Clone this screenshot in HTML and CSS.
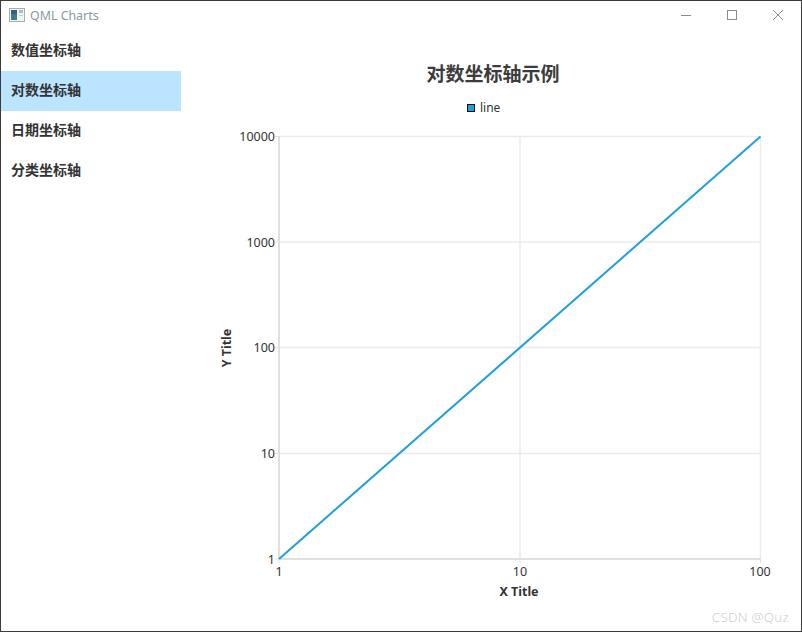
FILE: index.html
```html
<!DOCTYPE html>
<html lang="en">
<head>
    <meta charset="UTF-8">
    <title>QML Charts</title>
    <link rel="stylesheet" href="styles.css">
</head>
<body>
    <div class="window">
        <div class="titlebar">
            <svg class="app-icon" width="16" height="16" viewBox="0 0 16 16">
                <rect x="0.5" y="1.5" width="15" height="13" fill="#f2f4f4" stroke="#a9adad"/>
                <rect x="2" y="3" width="6" height="10" fill="#3c7f86"/>
                <rect x="2" y="3" width="6" height="4" fill="#35608c"/>
                <rect x="10" y="3" width="4" height="3" fill="#a9c4b4"/>
                <rect x="10" y="8" width="4" height="1" fill="#c4cccc"/>
            </svg>
            <span class="app-title">QML Charts</span>
            <div class="window-buttons">
                <svg width="12" height="12" viewBox="0 0 12 12"><path d="M1 6.5H11" stroke="#8c8c8c" fill="none"/></svg>
                <svg width="12" height="12" viewBox="0 0 12 12"><rect x="1.5" y="1.5" width="9" height="9" stroke="#8c8c8c" fill="none"/></svg>
                <svg width="12" height="12" viewBox="0 0 12 12"><path d="M1 1L11 11M11 1L1 11" stroke="#8c8c8c" fill="none"/></svg>
            </div>
        </div>
        <div class="content">
            <div class="sidebar">
                <div class="nav-item">数值坐标轴</div>
                <div class="nav-item active">对数坐标轴</div>
                <div class="nav-item">日期坐标轴</div>
                <div class="nav-item">分类坐标轴</div>
            </div>
            <svg class="chart" width="620" height="600" viewBox="181 31 620 600">
                <text class="chart-title" x="493" y="81" text-anchor="middle">对数坐标轴示例</text>

                <rect x="467.5" y="104.5" width="7" height="7" fill="#209fdf" stroke="#111"/>
                <text class="legend-label" x="480" y="112">line</text>

                <g class="grid">
                    <path d="M279 136.5H761M279 242H761M279 347.5H761M279 453.5H761"/>
                    <path d="M520 136V559M760.5 136V559"/>
                </g>
                <g class="axis">
                    <path d="M279 136V559M279 559H761"/>
                </g>
                <g class="ticks">
                    <path d="M275 136.5H279M275 242H279M275 347.5H279M275 453.5H279M275 559H279"/>
                    <path d="M279 559V563M520 559V563M760.5 559V563"/>
                </g>

                <path class="series" d="M279 559L760.5 136.5"/>

                <text class="tick" x="275" y="141" text-anchor="end">10000</text>
                <text class="tick" x="275" y="247" text-anchor="end">1000</text>
                <text class="tick" x="275" y="352" text-anchor="end">100</text>
                <text class="tick" x="275" y="458" text-anchor="end">10</text>
                <text class="tick" x="275" y="564" text-anchor="end">1</text>

                <text class="tick" x="279" y="576" text-anchor="middle">1</text>
                <text class="tick" x="520" y="576" text-anchor="middle">10</text>
                <text class="tick" x="760" y="576" text-anchor="middle">100</text>

                <text class="axis-title" x="519" y="596" text-anchor="middle">X Title</text>
                <text class="axis-title" x="231" y="348" text-anchor="middle" transform="rotate(-90 231 348)">Y Title</text>

                <text class="watermark" x="789" y="622" text-anchor="end">CSDN @Quz</text>
            </svg>
        </div>
    </div>
</body>
</html>
```

FILE: styles.css
```css
html, body {
    margin: 0;
    height: 100%;
    background: #fff;
    overflow: hidden;
}

.window {
    box-sizing: border-box;
    width: 802px;
    height: 632px;
    border: 1px solid #3a3a3a;
    display: flex;
    flex-direction: column;
    font-family: "Noto Sans", "Noto Sans CJK SC", sans-serif;
}

.titlebar {
    height: 30px;
    display: flex;
    align-items: center;
    padding-left: 8px;
    padding-bottom: 2px;
    box-sizing: border-box;
}

.app-title {
    margin-left: 5px;
    font-size: 12.4px;
    color: #8a98a5;
}

.app-icon {
    display: block;
}

.window-buttons {
    margin-left: auto;
    display: flex;
    gap: 34px;
    padding-right: 17px;
}

.window-buttons svg {
    display: block;
}

.content {
    flex: 1;
    display: flex;
}

.sidebar {
    width: 180px;
}

.nav-item {
    height: 40px;
    line-height: 38px;
    padding-left: 10px;
    font-size: 14px;
    font-weight: 700;
    color: #333;
}

.nav-item.active {
    background: #bae4ff;
}

.chart {
    display: block;
}

.chart-title {
    font-size: 19px;
    font-weight: 700;
    fill: #3c3c3c;
}

.tick {
    font-size: 12.5px;
    fill: #333;
}

.legend-label {
    font-size: 12px;
    fill: #333;
}

.axis-title {
    font-size: 12.5px;
    font-weight: 700;
    fill: #333;
}

.grid path {
    stroke: #ececec;
    stroke-width: 1.5;
    fill: none;
}

.axis path {
    stroke: #e0e0e0;
    stroke-width: 2;
    fill: none;
}

.ticks path {
    stroke: #e0e0e0;
    fill: none;
}

.series {
    stroke: #209fdf;
    stroke-width: 2;
    fill: none;
}

.watermark {
    font-size: 13.5px;
    font-weight: 300;
    letter-spacing: 0.2px;
    fill: #d0d0d0;
}
```
